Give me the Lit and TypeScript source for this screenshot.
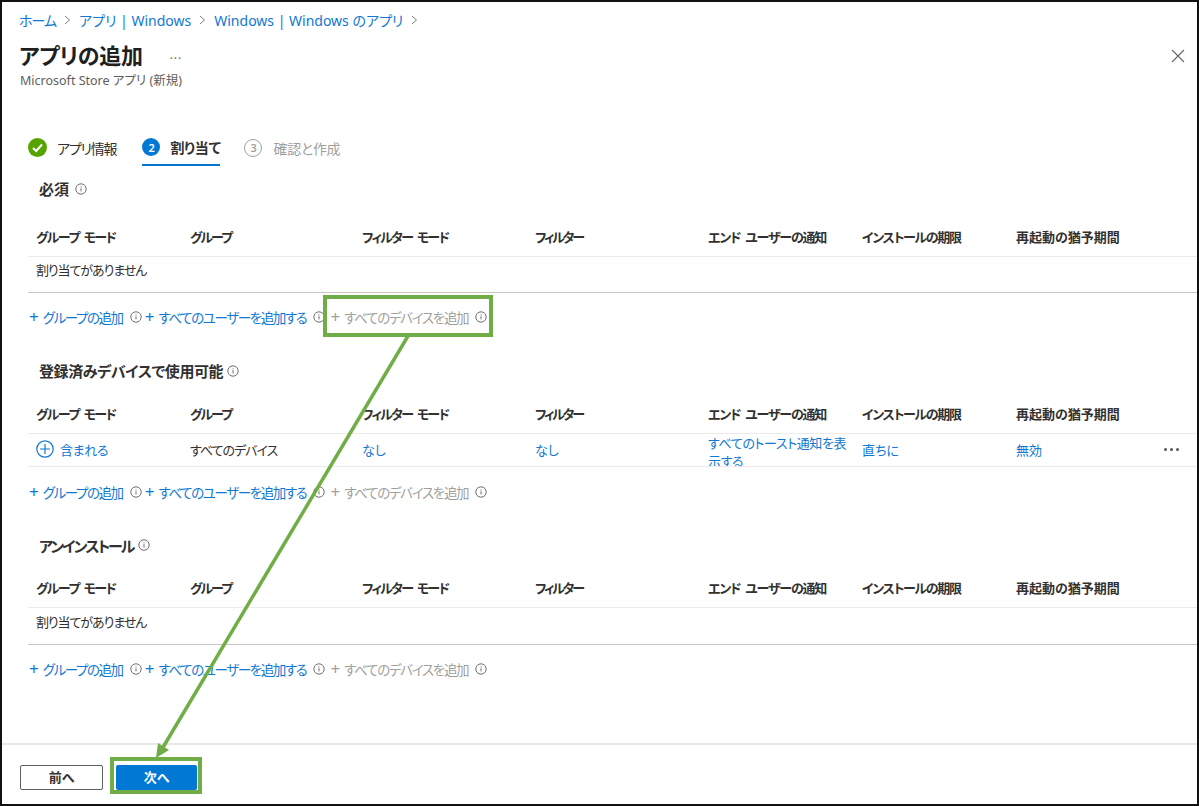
import { LitElement, html, css, svg } from "lit";
import { customElement } from "lit/decorators.js";

const COLS = ["グループ モード", "グループ", "フィルター モード", "フィルター", "エンド ユーザーの通知", "インストールの期限", "再起動の猶予期間"];

const info = () => html`<svg class="info" viewBox="0 0 12 12" width="12" height="12"><circle cx="6" cy="6" r="5.2" fill="none" stroke="#6f6f6f" stroke-width="1"/><path d="M6 5.2v3.2M6 3.4v1" stroke="#6f6f6f" stroke-width="1" fill="none"/></svg>`;

@customElement("app-root")
export class AppRoot extends LitElement {
  static styles = css`
    :host { display: block; width: 1199px; height: 806px; font-family: "Noto Sans", "Noto Sans CJK JP", sans-serif; font-feature-settings: "palt"; color: #323130; font-size: 13px; }
    * { box-sizing: border-box; }
    .page { position: relative; width: 1199px; height: 806px; border: 2px solid #111; background: #fff; display: flex; flex-direction: column; overflow: hidden; }
    .crumbs { height: 18px; margin: 9px 0 0 17px; display: flex; align-items: center; gap: 8px; font-size: 14px; color: #0f78d4; white-space: nowrap; }
    .crumbs svg { flex: none; }
    .home { letter-spacing: -1px; }
    .head { display: flex; align-items: center; height: 34px; margin: 9px 0 0 17px; position: relative; }
    h1 { margin: 0; font-size: 22px; font-weight: 600; line-height: 34px; color: #201f1e; letter-spacing: -0.3px; }
    .dots { margin-left: 27px; color: #666; font-size: 12px; letter-spacing: 1px; line-height: 12px; }
    .close { margin: 2px 12px 0 auto; }
    .sub { margin: 0 0 0 18px; height: 19px; line-height: 18px; font-size: 12.5px; color: #605e5c; }
    .tabs { display: flex; margin: 39px 0 0 26px; height: 50px; }
    .tab { display: flex; align-items: center; gap: 10px; height: 35px; font-size: 14px; white-space: nowrap; letter-spacing: -1.2px; }
    .tab.active { font-weight: 600; border-bottom: 2px solid #0078d4; margin: 0 24px 0 26px; height: 36px; gap: 10px; letter-spacing: -0.3px; }
    .tab.off { color: #a19f9d; gap: 11px; letter-spacing: -0.3px; }
    .step { width: 19px; height: 19px; border-radius: 50%; display: flex; align-items: center; justify-content: center; font-size: 11px; font-weight: 600; flex: none; }
    .step.blue { width: 18px; height: 18px; background: #0078d4; color: #fff; }
    .step.ring { width: 18px; height: 18px; border: 1px solid #a19f9d; color: #a19f9d; background: #fff; }
    .sec { margin: 0 0 0 26px; }
    .sec2 { margin-top: 35px; }
    .title { margin-left: 11px; height: 20px; padding-bottom: 3px; display: flex; align-items: center; gap: 6px; font-size: 15px; font-weight: 600; color: #323130; }
    .t2 { letter-spacing: -0.4px; gap: 4px; }
    .t3 { letter-spacing: -1.9px; gap: 4px; padding-bottom: 4px; }
    .grid { display: grid; grid-template-columns: 154px 172px 173px 173px 154px 154px 1fr 35px; padding-left: 8px; }
    .hrow { height: 37px; padding-bottom: 4px; border-bottom: 1px solid #edebe9; align-items: center; font-weight: 600; font-size: 13px; color: #323130; word-spacing: 3px; }
    .hrow span:nth-child(1) { letter-spacing: -1.5px; }
    .hrow span:nth-child(2) { letter-spacing: -1.9px; }
    .hrow span:nth-child(3) { letter-spacing: -1.7px; }
    .hrow span:nth-child(4) { letter-spacing: -2.2px; }
    .hrow span:nth-child(5) { letter-spacing: -1.2px; }
    .hrow span:nth-child(6) { letter-spacing: -1.3px; }
    .m20 { margin-top: 20px; }
    .m15 { margin-top: 15px; }
    .m14 { margin-top: 14px; }
    .hrow span { white-space: nowrap; }
    .empty { height: 36px; padding: 5px 0 0 8px; line-height: 16px; border-bottom: 1px solid #c8c6c4; font-size: 13px; letter-spacing: -1.1px; }
    .e37 { height: 37px; padding-top: 6px; }
    .drow { height: 33px; padding-bottom: 2px; grid-template-rows: 30px; border-bottom: 1px solid #edebe9; align-items: center; font-size: 13px; }
    .link { color: #0f78d4; }
    .inc { display: flex; align-items: center; gap: 6px; font-size: 13px; letter-spacing: -0.4px; }
    .devs { letter-spacing: -1px; }
    .wrap { line-height: 18px; height: 32px; align-self: start; overflow: hidden; width: 140px; letter-spacing: -0.4px; }
    .more { display: flex; gap: 3px; padding-left: 2px; }
    .more i { width: 3px; height: 3px; border-radius: 50%; background: #555; }
    .adds { display: flex; align-items: center; height: 20px; margin-top: 15px; gap: 3px; font-size: 13.5px; white-space: nowrap; padding-left: 1px; }
    .adds.tight { margin-top: 14px; }
    .add { display: flex; align-items: center; gap: 7px; color: #0f78d4; letter-spacing: -1.4px; }
    .add.off { color: #a19f9d; margin-left: 2px; letter-spacing: -1.3px; }
    .adds .plus { margin-right: -3px; font-size: 17px; line-height: 14px; letter-spacing: 0; }
    .info { flex: none; }
    .spacer { flex: 1; }
    .foot { height: 61px; border-top: 2px solid #e8e8e8; display: flex; align-items: flex-start; padding: 20px 0 0 18px; gap: 13px; }
    .btn { height: 25px; padding-bottom: 2px; display: flex; align-items: center; justify-content: center; font-size: 13px; font-weight: 600; border-radius: 2px; }
    .prev { width: 83px; border: 1px solid #605e5c; color: #323130; background: #fff; }
    .next { width: 81px; background: #0078d4; color: #fff; }
    .over { position: absolute; left: -2px; top: -2px; pointer-events: none; }
  `;

  private header(m: string) {
    return html`<div class="grid hrow ${m}">${COLS.map((c) => html`<span>${c}</span>`)}</div>`;
  }

  private adds(cls = "") {
    return html`<div class="adds ${cls}">
      <span class="add"><span class="plus">+</span>グループの追加 ${info()}</span>
      <span class="add"><span class="plus">+</span>すべてのユーザーを追加する ${info()}</span>
      <span class="add off"><span class="plus">+</span>すべてのデバイスを追加 ${info()}</span>
    </div>`;
  }

  private chev() {
    return html`<svg width="7" height="10" viewBox="0 0 7 10"><path d="M1 1l4.5 4L1 9" fill="none" stroke="#7a7a7a" stroke-width="1"/></svg>`;
  }

  render() {
    return html`<div class="page">
      <div class="crumbs">
        <span class="home">ホーム</span>${this.chev()}<span>アプリ | Windows</span>${this.chev()}<span>Windows | Windows のアプリ</span>${this.chev()}
      </div>
      <div class="head">
        <h1>アプリの追加</h1><span class="dots">...</span>
        <svg class="close" width="14" height="14" viewBox="0 0 14 14"><path d="M1 1l12 12M13 1L1 13" stroke="#666" stroke-width="1.1" fill="none"/></svg>
      </div>
      <div class="sub">Microsoft Store アプリ (新規)</div>
      <div class="tabs">
        <div class="tab">
          <svg width="19" height="19" viewBox="0 0 19 19"><circle cx="9.5" cy="9.5" r="9.5" fill="#57a300"/><path d="M5 10l3.2 3L14 6.5" fill="none" stroke="#fff" stroke-width="2"/></svg>
          アプリ情報
        </div>
        <div class="tab active"><span class="step blue">2</span>割り当て</div>
        <div class="tab off"><span class="step ring">3</span>確認と作成</div>
      </div>
      <div class="sec">
        <div class="title">必須 ${info()}</div>
        ${this.header("m20")}
        <div class="empty">割り当てがありません</div>
        ${this.adds("tight")}
      </div>
      <div class="sec sec2">
        <div class="title t2">登録済みデバイスで使用可能 ${info()}</div>
        ${this.header("m15")}
        <div class="grid drow">
          <span class="inc link"><svg width="18" height="18" viewBox="0 0 18 18"><circle cx="9" cy="9" r="8.2" fill="none" stroke="#0f78d4" stroke-width="1.2"/><path d="M9 4v10M4 9h10" stroke="#0f78d4" stroke-width="1.2"/></svg>含まれる</span>
          <span class="devs">すべてのデバイス</span>
          <span class="link">なし</span>
          <span class="link">なし</span>
          <span class="link wrap">すべてのトースト通知を表示する</span>
          <span class="link">直ちに</span>
          <span class="link">無効</span>
          <span class="more"><i></i><i></i><i></i></span>
        </div>
        ${this.adds()}
      </div>
      <div class="sec sec2">
        <div class="title t3">アンインストール ${info()}</div>
        ${this.header("m14")}
        <div class="empty e37">割り当てがありません</div>
        ${this.adds("tight")}
      </div>
      <div class="spacer"></div>
      <div class="foot">
        <div class="btn prev">前へ</div>
        <div class="btn next">次へ</div>
      </div>
      <svg class="over" width="1199" height="806" viewBox="0 0 1199 806">
        ${svg`
          <rect x="325" y="297" width="166" height="38" fill="none" stroke="#70ad47" stroke-width="4"/>
          <rect x="112" y="759" width="88" height="33" fill="none" stroke="#70ad47" stroke-width="4"/>
          <line x1="408" y1="336" x2="162" y2="749" stroke="#70ad47" stroke-width="3.5"/>
          <path d="M156 758l2-15 11 7z" fill="#70ad47"/>
        `}
      </svg>
    </div>`;
  }
}
